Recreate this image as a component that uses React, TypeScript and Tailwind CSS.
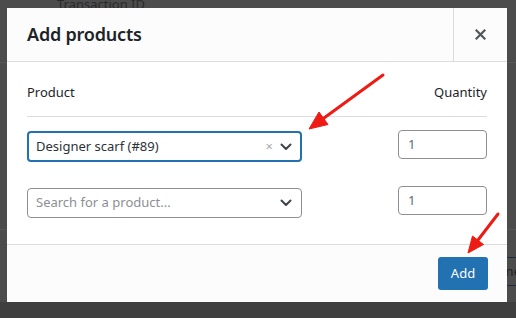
import React from 'react';

const font = { fontFamily: '"Noto Sans", "Open Sans", sans-serif' };

const Chevron = () => (
  <svg width="12" height="8" viewBox="0 0 12 8" className="text-[#3c434a]">
    <path d="M1.5 1.5 L6 6 L10.5 1.5" fill="none" stroke="currentColor" strokeWidth="2" strokeLinecap="round" strokeLinejoin="round" />
  </svg>
);

const Arrows = () => (
  <svg className="absolute left-0 top-0 pointer-events-none" width="516" height="318" viewBox="0 0 516 318">
    <g fill="#ee1b14" stroke="#ee1b14">
      <line x1="383" y1="75" x2="324" y2="118" strokeWidth="3" strokeLinecap="round" />
      <polygon points="309,129 328,124.5 319,112" strokeWidth="1" strokeLinejoin="round" />
      <line x1="498" y1="214" x2="478" y2="240" strokeWidth="3" strokeLinecap="round" />
      <polygon points="468,253 483.5,244.5 472.5,236" strokeWidth="1" strokeLinejoin="round" />
    </g>
  </svg>
);

export default function App() {
  return (
    <div className="relative w-[516px] h-[318px] overflow-hidden bg-[#4c4c4c]" style={font}>
      {/* dimmed page behind the dialog */}
      <div className="absolute left-[57px] top-[-5px] text-[13px] text-[#2a2a2a]">Transaction ID</div>
      <div className="absolute left-0 right-0 top-[62px] h-px bg-[#575757]" />
      <div className="absolute left-0 right-0 top-[229px] h-px bg-[#575757]" />
      <div className="absolute left-[470px] top-[257px] w-[60px] h-[29px] border border-[#1b2b3d] rounded-[3px] text-[13px] text-[#222] flex items-center justify-end pr-[8px]">Done</div>
      <div className="absolute left-0 right-0 top-[302px] bottom-0 bg-[#3f3f3f]" />

      {/* dialog */}
      <div className="absolute left-[7px] top-[8px] w-[500px] h-[294px] bg-white flex flex-col">
        <div className="h-[54px] shrink-0 bg-[#fcfcfc] border-b border-[#dcdcde] flex items-stretch">
          <div className="flex-1 flex items-center pl-[20px] text-[18px] font-semibold text-[#1d2327] tracking-[-0.2px]">
            Add products
          </div>
          <div className="w-[54px] border-l border-[#dcdcde] flex items-center justify-center">
            <svg width="11" height="11" viewBox="0 0 11 11">
              <path d="M1.5 1.5 L9.5 9.5 M9.5 1.5 L1.5 9.5" stroke="#50575e" strokeWidth="2.2" strokeLinecap="square" />
            </svg>
          </div>
        </div>

        <div className="flex-1 px-[20px] pt-[20px]">
          <div className="h-[35px] border-b border-[#dcdcde] flex justify-between text-[13px] text-[#1d2327] leading-[20px]">
            <span>Product</span>
            <span>Quantity</span>
          </div>
          <div className="flex justify-between">
            <div className="w-[275px] flex flex-col">
              <div className="mt-[14px] h-[31px] rounded-[4px] border-2 border-[#2271b1] flex items-center pl-[7px] pr-[8px] text-[13px] text-[#2c3338]">
                <span className="flex-1">Designer scarf (#89)</span>
                <span className="text-[#a7aaad] text-[13px] mr-[7px] leading-none">×</span>
                <Chevron />
              </div>
              <div className="mt-[26px] h-[30px] rounded-[4px] border border-[#8c8f94] flex items-center pl-[8px] pr-[9px] text-[13px] text-[#8c8f94]">
                <span className="flex-1">Search for a product...</span>
                <Chevron />
              </div>
            </div>
            <div className="w-[89px] flex flex-col">
              <div className="mt-[13px] h-[29px] rounded-[4px] border border-[#8c8f94] flex items-center pl-[9px] text-[13px] text-[#646970]">1</div>
              <div className="mt-[27px] h-[29px] rounded-[4px] border border-[#8c8f94] flex items-center pl-[9px] text-[13px] text-[#646970]">1</div>
            </div>
          </div>
        </div>

        <div className="h-[58px] shrink-0 bg-[#fcfcfc] border-t border-[#dcdcde] flex items-center justify-end pr-[19px]">
          <button className="w-[50px] h-[33px] rounded-[3px] bg-[#2271b1] text-white text-[13px]">Add</button>
        </div>
      </div>

      <Arrows />
    </div>
  );
}
